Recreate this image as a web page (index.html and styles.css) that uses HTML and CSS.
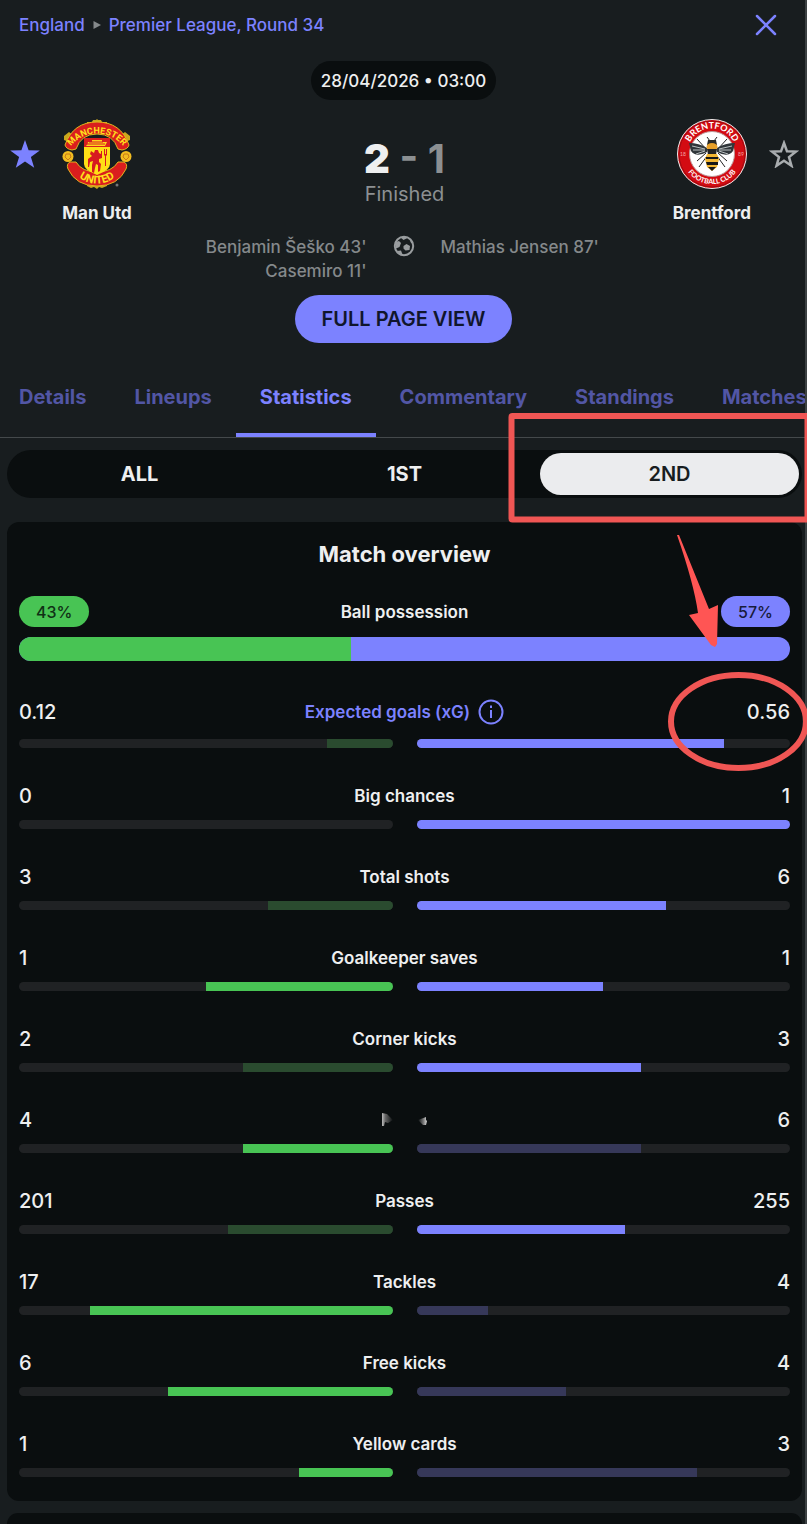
FILE: index.html
```html
<!DOCTYPE html>
<html lang="en">
<head>
<meta charset="utf-8">
<meta name="viewport" content="width=device-width, initial-scale=1">
<title>Man Utd 2 - 1 Brentford</title>
<link rel="stylesheet" href="styles.css">
</head>
<body>
<div class="page">
  <header class="topbar">
    <nav class="crumbs" aria-label="Breadcrumb">
      <a href="#">England</a>
      <svg class="crumb-arrow" viewBox="0 0 8 8" aria-hidden="true"><path d="M0.5 0 8 4 0.5 8z"/></svg>
      <a href="#">Premier League, Round 34</a>
    </nav>
    <button class="close" aria-label="Close"><svg viewBox="0 0 22 22"><path d="M2 2 20 20M20 2 2 20"/></svg></button>
  </header>

  <div class="date">28/04/2026 • 03:00</div>

  <section class="match">
    <div class="side">
      <button class="star" aria-label="Unfollow Man Utd"><svg viewBox="0 0 30 28"><path class="star-on" d="M15 0 18.6 10.2 29.8 10.4 20.9 17 24.2 27.8 15 21.4 5.8 27.8 9.1 17 .2 10.4 11.4 10.2z"/></svg></button>
      <a class="team" href="#">
        <svg class="crest" viewBox="0 0 70 70" aria-hidden="true">
          <defs>
            <path id="mu-top" d="M7 30A33 33 0 0 1 63 30"/>
            <path id="mu-bottom" d="M9 49A29.500 29.500 0 0 0 61 49"/>
          </defs>
          <path d="M25 3h5l1-2h3l1-1 1 1h3l1 2h5v5H25zM2 17l5-4 4 3-4 7-5-2zM68 17l-5-4-4 3 4 7 5-2zM25 64h20v3l-5 2-3-1-2 2-3-2-3 1-4-2z" fill="#c9a81c"/>
          <path d="M3 26Q11 3 35 3T67 26Q66 30 60 31L56 30Q51 15 35 15T14 30L10 31Q4 30 3 26z" fill="#da1e1e" stroke="#e0b51d"/>
          <path d="M8 43Q4 45 6 50Q14 67 35 67T64 50Q66 45 62 43L56 43Q50 53 35 53T14 43z" fill="#da1e1e" stroke="#e0b51d"/>
          <circle cx="6" cy="37.500" r="5.500" fill="#f2bd20"/><circle cx="64" cy="37.500" r="5.500" fill="#f2bd20"/>
          <path d="M4 35h4l1 3-3 3-3-3zM62 35h4l1 3-3 3-3-3z" fill="none" stroke="#c97b18"/>
          <path d="M22 19h26v26Q48 51 35 56 22 51 22 45z" fill="#ffdf16"/>
          <path d="M22 19h26v9H22z" fill="#da1e1e"/>
          <path d="M24 27q2-2 2-4h4v-2h10v2h5l-2 4z" fill="#ffd51c"/>
          <path d="M27 23h14M25 25h18" stroke="#da1e1e"/>
          <path d="M29 32l3 2 1-3h3l1 3 2 1v-3h1v7l-3 1v3l2 2-1 7-2 1v-7l-2-1-1 4-1 5-2-1v-7l1-4-3 1-1 5h-1v-8l4-3-2-2zM42 30h1v5h1v-5h1v6l-1 1v10h-1V37l-1-1z" fill="#d71920"/>
          <text class="mu-text"><textPath href="#mu-top" startOffset="50%">MANCHESTER</textPath></text>
          <text class="mu-text mu-low"><textPath href="#mu-bottom" startOffset="50%">UNITED</textPath></text>
          <circle cx="55" cy="66" r="1.500" fill="#777"/>
        </svg>
        <span>Man Utd</span>
      </a>
    </div>
    <div class="result">
      <div class="score"><b>2</b> - 1</div>
      <div class="status">Finished</div>
    </div>
    <div class="side side-away">
      <a class="team" href="#">
        <svg class="crest" viewBox="0 0 70 70" aria-hidden="true">
          <defs>
            <path id="br-top" d="M10.500 34A24.500 24.500 0 0 1 59.500 34"/>
            <path id="br-bottom" d="M5 35A30 30 0 0 0 65 35"/>
          </defs>
          <circle cx="35" cy="35" r="34.500" fill="#d30b12" stroke="#eee"/>
          <circle cx="35" cy="35" r="33" fill="none" stroke="#9d0a10"/>
          <circle cx="35" cy="35" r="22.500" fill="#fff" stroke="#b99"/>
          <g fill="none" stroke="#222">
            <path d="M33 22l-3-4M37 22l3-4M30 31 20 20M40 31 50 20M30 37l-8 11M40 37l8 11M29 34 20 42M41 34l9 8"/>
          </g>
          <path d="M30 29Q22 24 12 24l2 8q5 7 16 1zM40 29q8-5 18-5l-2 8q-5 7-16 1z" fill="#30363a"/>
          <path d="M28 30 15 27M28 31 16 31M28 32l-9 3M42 30l13-3M42 31h12M42 32l9 3" stroke="#b9bfc0"/>
          <path d="M31 21l8 0 1 5-2 2h-6l-2-2z" fill="#2a2a28"/>
          <ellipse cx="35" cy="28" rx="5.500" ry="4" fill="#e7a02a"/>
          <path d="M30 30h10l-1 6h-8z" fill="#222"/>
          <path d="M30 35h10l2 5-2 8-5 4-5-4-2-8z" fill="#f2b632"/>
          <path d="M29 38h12v2H29zM29 43h12v3H30zM31 48h8l-4 4z" fill="#171717"/>
          <text class="br-text"><textPath href="#br-top" startOffset="50%">BRENTFORD</textPath></text>
          <text class="br-text br-low"><textPath href="#br-bottom" startOffset="50%">FOOTBALL CLUB</textPath></text>
          <text class="br-year" x="6" y="37">18</text><text class="br-year" x="64" y="37">89</text>
        </svg>
        <span>Brentford</span>
      </a>
      <button class="star" aria-label="Follow Brentford"><svg viewBox="0 0 30 28"><path class="star-off" d="M15 3 18 11.300 27 11.600 20 17.100 22.500 25.800 15 20.800 7.500 25.800 10 17.100 3 11.600 12 11.300z"/></svg></button>
    </div>
  </section>

  <section class="scorers">
    <div class="scorers-home">Benjamin Šeško 43'<br>Casemiro 11'</div>
    <svg class="ball" viewBox="0 0 22 22" aria-label="Goals"><circle cx="11" cy="11" r="9.200"/><path d="M7.500 2.500 10.500 5 14.500 3 11 1zM10.500 11l3-2 3.500 2-.5 4-4 .5-2-2zM2 7l4-1 2 2-1.500 4L3 13.500zM4 16l4-.5 1.500 4-2 .5zM17 5l1 3 2 1-1-4z"/></svg>
    <div>Mathias Jensen 87'</div>
  </section>

  <button class="full">FULL PAGE VIEW</button>

  <nav class="tabs" aria-label="Match sections">
    <a href="#">Details</a><a href="#">Lineups</a><a href="#" class="active" aria-current="page">Statistics</a><a href="#">Commentary</a><a href="#">Standings</a><a href="#">Matches</a>
  </nav>

  <div class="periods">
    <button>ALL</button><button>1ST</button><button class="selected" aria-pressed="true">2ND</button>
  </div>

  <main class="card">
    <h1>Match overview</h1>
    <section class="possession">
      <div class="line"><span class="pill home">43%</span><span class="name">Ball possession</span><span class="pill away">57%</span></div>
      <div class="split"><div class="home" style="width:43%"></div></div>
    </section>

    <section class="stat">
      <div class="line"><span>0.12</span><a class="name info" href="#">Expected goals (xG)<svg viewBox="0 0 26 26" aria-hidden="true"><circle cx="13" cy="13" r="11.500"/><path d="M13 11v8M13 6.500v2.500"/></svg></a><span>0.56</span></div>
      <div class="bars"><div class="track left"><div class="home dim" style="width:17.65%"></div></div><div class="track"><div class="away" style="width:82.35%"></div></div></div>
    </section>
    <section class="stat">
      <div class="line"><span>0</span><span class="name">Big chances</span><span>1</span></div>
      <div class="bars"><div class="track left"></div><div class="track"><div class="away" style="width:100%"></div></div></div>
    </section>
    <section class="stat">
      <div class="line"><span>3</span><span class="name">Total shots</span><span>6</span></div>
      <div class="bars"><div class="track left"><div class="home dim" style="width:33.33%"></div></div><div class="track"><div class="away" style="width:66.67%"></div></div></div>
    </section>
    <section class="stat">
      <div class="line"><span>1</span><span class="name">Goalkeeper saves</span><span>1</span></div>
      <div class="bars"><div class="track left"><div class="home" style="width:50%"></div></div><div class="track"><div class="away" style="width:50%"></div></div></div>
    </section>
    <section class="stat">
      <div class="line"><span>2</span><span class="name">Corner kicks</span><span>3</span></div>
      <div class="bars"><div class="track left"><div class="home dim" style="width:40%"></div></div><div class="track"><div class="away" style="width:60%"></div></div></div>
    </section>
    <section class="stat">
      <div class="line"><span>4</span>
        <svg class="smudge" viewBox="0 0 46 14" aria-hidden="true">
          <defs>
            <linearGradient id="fade-right"><stop offset="0" stop-color="#bbb"/><stop offset=".3" stop-color="#666"/><stop offset="1" stop-color="#0a0e0f"/></linearGradient>
            <linearGradient id="fade-left"><stop offset="0" stop-color="#0a0e0f"/><stop offset=".6" stop-color="#777"/><stop offset="1" stop-color="#ddd"/></linearGradient>
          </defs>
          <path d="M0 0 5 1 11 7 6 10 3 9 2 13H0z" fill="url(#fade-right)"/>
          <path d="M36 7 44 4 44 7 45 8 44 12 41 12z" fill="url(#fade-left)"/>
        </svg>
      <span>6</span></div>
      <div class="bars"><div class="track left"><div class="home" style="width:40%"></div></div><div class="track"><div class="away dim" style="width:60%"></div></div></div>
    </section>
    <section class="stat">
      <div class="line"><span>201</span><span class="name">Passes</span><span>255</span></div>
      <div class="bars"><div class="track left"><div class="home dim" style="width:44.08%"></div></div><div class="track"><div class="away" style="width:55.92%"></div></div></div>
    </section>
    <section class="stat">
      <div class="line"><span>17</span><span class="name">Tackles</span><span>4</span></div>
      <div class="bars"><div class="track left"><div class="home" style="width:80.95%"></div></div><div class="track"><div class="away dim" style="width:19.05%"></div></div></div>
    </section>
    <section class="stat">
      <div class="line"><span>6</span><span class="name">Free kicks</span><span>4</span></div>
      <div class="bars"><div class="track left"><div class="home" style="width:60%"></div></div><div class="track"><div class="away dim" style="width:40%"></div></div></div>
    </section>
    <section class="stat">
      <div class="line"><span>1</span><span class="name">Yellow cards</span><span>3</span></div>
      <div class="bars"><div class="track left"><div class="home" style="width:25%"></div></div><div class="track"><div class="away dim" style="width:75%"></div></div></div>
    </section>
  </main>
  <div class="card next-card"></div>

  <svg class="markup" viewBox="500 410 307 365" aria-hidden="true">
    <rect x="511.500" y="416" width="296" height="103.500" rx="1"/>
    <ellipse cx="738.500" cy="721.500" rx="67.500" ry="46.500"/>
    <path d="M677 535 679 535 709 609 718 605 717 644 715 647 711 645 689 615 698 613Q694 584 677 535z"/>
  </svg>
</div>
</body>
</html>
```
FILE: styles.css
```css
* { box-sizing: border-box; }
body {
  margin: 0;
  background: #181d1f;
  color: #eeeff0;
  font: 500 17px/24px Inter, "Liberation Sans", sans-serif;
}
a { color: inherit; text-decoration: none; }
button {
  border: 0;
  padding: 0;
  background: none;
  color: inherit;
  font: inherit;
  cursor: pointer;
}
svg { display: block; flex: none; }

.page {
  position: relative;
  min-height: 100vh;
  display: flex;
  flex-direction: column;
  overflow: hidden;
}
/* Edge of the panel */
.page::after {
  content: "";
  position: absolute;
  inset: 0 0 0 auto;
  width: 2px;
  background: #3c4143;
}

.topbar {
  display: flex;
  justify-content: space-between;
  align-items: center;
  padding: 13px 30px 0 19px;
  color: #7c82ff;
}
.crumbs { display: flex; align-items: center; gap: 8px; }
.crumb-arrow { width: 8px; height: 8px; fill: #85898b; }
.close svg { width: 22px; height: 22px; fill: none; stroke: #7c82ff; stroke-width: 2.5; stroke-linecap: round; }

.date {
  align-self: center;
  margin-top: 24px;
  padding: 8px 10px 7px;
  border-radius: 20px;
  background: #0a0e0f;
}

.match {
  display: grid;
  grid-template-columns: 1fr auto 1fr;
  padding: 19px 8px 0 10px;
}
.side { display: flex; align-items: flex-start; gap: 22px; }
.side-away { justify-content: flex-end; gap: 18px; }
.star { padding-top: 21px; }
.star svg { width: 30px; height: 28px; }
.star-on { fill: #7c82ff; }
.star-off { fill: none; stroke: #a9adaf; stroke-width: 2.5; }
.team {
  display: flex;
  flex-direction: column;
  align-items: center;
  gap: 12px;
  font-weight: 700;
}
.crest { width: 70px; height: 70px; }
.mu-text { fill: #ffe11c; font: 700 9px Roboto, sans-serif; text-anchor: middle; }
.mu-low { font-size: 11px; }
.br-text { fill: #fff; font: 700 9px Lato, sans-serif; text-anchor: middle; }
.br-low { font-size: 7px; }
.br-year { fill: #f3a5a5; font: 400 5px Lato, sans-serif; text-anchor: middle; }

.result { padding-top: 17px; text-align: center; color: #8c9092; }
.score { font-size: 40px; line-height: 46px; font-weight: 700; }
.score b { color: #eeeff0; }
.status { font-size: 20px; font-weight: 400; }

.scorers {
  display: grid;
  grid-template-columns: 1fr 22px 1fr;
  gap: 26px;
  padding-top: 10px;
  color: #85898b;
}
.scorers-home { text-align: right; }
.ball { width: 22px; height: 22px; fill: #999d9f; }
.ball circle { fill: none; stroke: #999d9f; stroke-width: 2; }

.full {
  align-self: center;
  margin-top: 12px;
  padding: 12px 27px;
  border-radius: 24px;
  background: #7c82ff;
  color: #10162c;
  font-size: 20px;
  font-weight: 600;
}

.tabs {
  display: flex;
  margin-top: 30px;
  border-bottom: 1px solid #44494b;
  color: #5256a5;
  font-size: 20px;
  font-weight: 700;
  white-space: nowrap;
}
.tabs a { padding: 12px 24px 24px; border-bottom: 4px solid transparent; }
.tabs a:first-child { padding-left: 19px; }
.tabs .active { color: #7c82ff; border-color: #7c82ff; }

.periods {
  display: flex;
  gap: 6px;
  margin: 12px 5px 0 7px;
  padding: 3px;
  border-radius: 24px;
  background: #0a0e0f;
  font-size: 20px;
  font-weight: 700;
}
.periods button { flex: 1; padding: 9px; border-radius: 21px; }
.periods .selected { background: #ebecee; color: #181d1f; font-weight: 600; }

.card {
  margin: 24px 5px 0 7px;
  padding: 20px 12px 24px;
  border-radius: 12px;
  background: #0a0e0f;
}
.next-card {
  flex: 1;
  margin-top: 12px;
  padding: 0;
  border-radius: 12px 12px 0 0;
}
h1 { margin: 0 0 30px; font-size: 22px; line-height: 24px; font-weight: 700; text-align: center; }
.line {
  display: grid;
  grid-template-columns: 1fr auto 1fr;
  align-items: center;
  font-size: 20px;
}
.line > :last-child { justify-self: end; }
.line > :first-child { justify-self: start; }
.name { font-size: 17px; font-weight: 600; }
.home { background: #48c454; }
.away { background: #7c82ff; }
.home.dim { background: #2a4b2f; }
.away.dim { background: #363859; }
.line .pill { padding: 4px 17px 3px; border-radius: 16px; font-size: 16px; }
.pill.home { color: #103015; }
.pill.away { color: #171b3c; }
.split {
  height: 24px;
  margin: 10px 0 37px;
  border-radius: 12px;
  overflow: hidden;
  background: #7c82ff;
}
.split .home { height: 100%; }

.stat + .stat { margin-top: 36px; }
.info { display: flex; align-items: center; gap: 8px; padding: 1px 0; color: #7c82ff; }
.info svg { width: 26px; height: 26px; fill: none; stroke: #7c82ff; stroke-width: 2; }
.smudge { width: 46px; height: 14px; }
.bars { display: grid; grid-template-columns: 1fr 1fr; gap: 24px; margin-top: 13px; }
.stat + .stat .bars { margin-top: 12px; }
.track {
  display: flex;
  height: 9px;
  border-radius: 5px;
  overflow: hidden;
  background: #202224;
}
.left { justify-content: flex-end; }

/* Hand-drawn highlights laid over the page */
.markup {
  position: absolute;
  z-index: 1;
  top: 410px;
  right: 0;
  width: 307px;
  height: 365px;
  fill: none;
  stroke: #f05654;
  stroke-width: 6;
  pointer-events: none;
}
.markup path { fill: #ff5554; stroke: none; }
```
